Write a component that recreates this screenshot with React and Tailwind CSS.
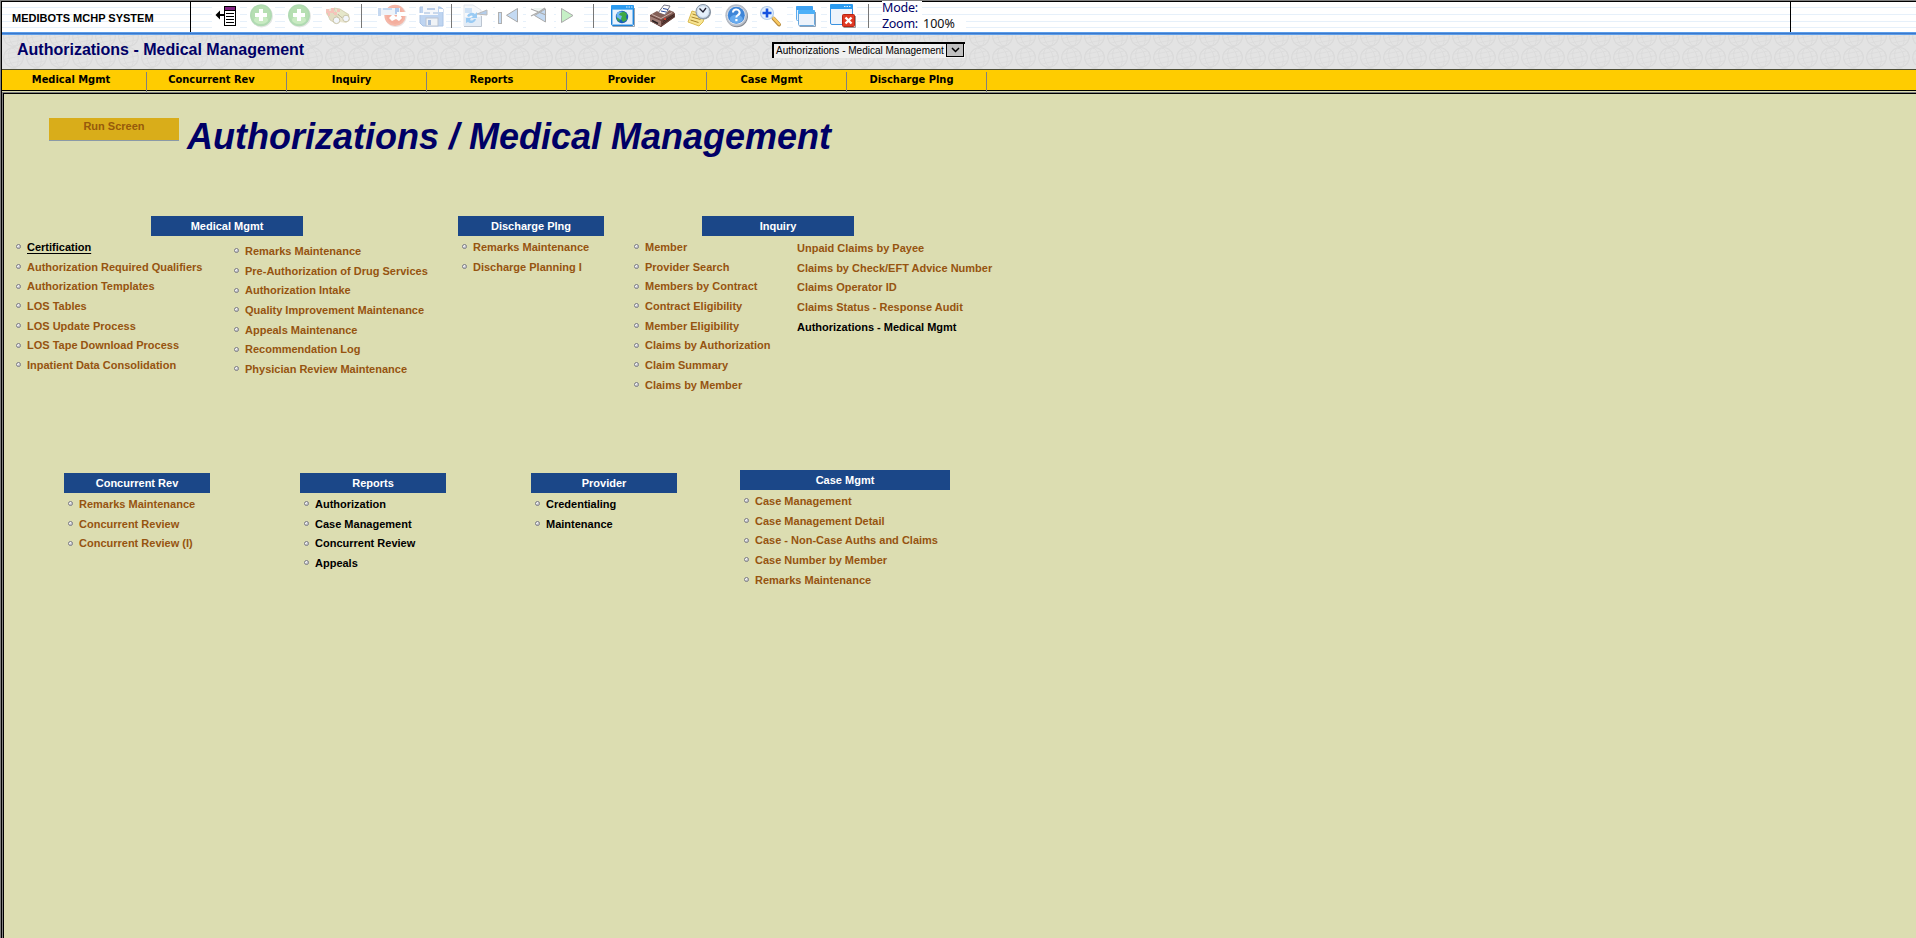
import React from "react";

const NAV = ["Medical Mgmt", "Concurrent Rev", "Inquiry", "Reports", "Provider", "Case Mgmt", "Discharge Plng"];

/* A slice of the toolbar: x is the slice's left edge in toolbar coordinates. */
function Slice({ x, w, children }) {
  return (
    <svg className="block h-[30px] shrink-0" width={w} height="30" viewBox={`${x} 2 ${w} 30`}>
      {children}
    </svg>
  );
}

function Sep({ x, w, at }) {
  return (
    <Slice x={x} w={w}>
      <rect x={at} y="4" width="1" height="24" fill="#777" />
    </Slice>
  );
}

function Plus({ x, w, cx }) {
  return (
    <Slice x={x} w={w}>
      <rect x={cx - 14} y="2" width="28" height="27" fill="#fff" />
      <circle cx={cx + 0.7} cy="16.200" r="11.200" fill="#e3e6e3" />
      <circle cx={cx} cy="15.200" r="11" fill="#b0dab2" />
      <circle cx={cx} cy="14.800" r="9.400" fill="#b6dfb2" />
      <ellipse cx={cx} cy="20" rx="7" ry="4" fill="#c9ebc2" />
      <path d={`M${cx - 2} 9h4v4h4v4h-4v4h-4v-4h-4v-4h4z`} fill="#fff" />
    </Slice>
  );
}

function Toolbar() {
  return (
    <div className="flex h-[30px]">
      <Slice x={191} w={55}>
        <rect x="212" y="2" width="28" height="27" fill="#fff" />
        <rect x="224.500" y="6.500" width="11" height="19" fill="#fff" stroke="#000" />
        <rect x="225" y="7" width="10" height="3" fill="#802080" />
        <path d="M224 10.500h12M226 13.500h8M226 16.500h8M226 19.500h8M226 22.500h8" stroke="#000" />
        <path d="M219 15h5" stroke="#000" strokeWidth="2" />
        <path d="M215.500 15l4.500-4.500v9z" fill="#000" />
      </Slice>
      <Plus x={246} w={38} cx={261} />
      <Plus x={284} w={36} cx={299} />
      <Slice x={320} w={36}>
        <rect x="322" y="2" width="32" height="27" fill="#fff" />
        <g opacity=".8">
          <path d="M326 10l6-2 8 1 9 5 1 6-4 3-6-1-4 2-5-5-5-5z" fill="#e6e0c4" />
          <path d="M334 8l6 1 9 6-4 4-9-5z" fill="#dfe2bd" stroke="#c2bd9a" strokeWidth=".7" />
          <path d="M327 13l5-1 7 6-4 5-5-3z" fill="#ddd5b4" stroke="#c2bd9a" strokeWidth=".7" />
          <path d="M326 9h3v2h2v-3h3v4h3v-3h3v3h-3v3h-3v-2h-4v3h-2v-3h-2z" fill="#f5b5aa" />
          <path d="M338 14l4 4" stroke="#b5b08c" />
          <circle cx="336.500" cy="20.300" r="3.300" fill="#f0f5fc" stroke="#bdb795" />
          <circle cx="346" cy="18.500" r="3.300" fill="#f0f5fc" stroke="#bdb795" />
        </g>
      </Slice>
      <Sep x={356} w={18} at={361} />
      <Slice x={374} w={40}>
        <rect x="377" y="2" width="32" height="27" fill="#fff" />
        <circle cx="395.700" cy="16" r="11" fill="#e9e4e4" />
        <circle cx="395" cy="15.400" r="10.600" fill="#f5b7a8" />
        <circle cx="395" cy="15.400" r="8.500" fill="#f4ae9e" />
        <path d="M389 18l3-3h2l2 2 2-2h2l2 3-3 3-3-2-4 2z" fill="#fff" />
        <rect x="378" y="8" width="22" height="7" fill="#eef3f9" />
        <rect x="378" y="8" width="3" height="8" fill="#c5d8f0" />
        <rect x="383" y="8" width="9" height="2" fill="#c6daf2" />
        <rect x="395" y="8" width="4" height="6" fill="#b2cbee" />
        <rect x="397" y="12" width="10" height="4" fill="#fff" />
      </Slice>
      <Slice x={414} w={32}>
        <rect x="416" y="2" width="30" height="27" fill="#fff" />
        <g opacity=".8">
          <path d="M420 7h20l3 2v17h-20l-3-3z" fill="#b0cbee" stroke="#97b6e0" />
          <rect x="423" y="4" width="15" height="11" fill="#f4f7fb" />
          <rect x="427" y="8" width="8" height="2" fill="#a9c2e6" />
          <rect x="424" y="12" width="6" height="2" fill="#bccfe8" />
          <rect x="433" y="12" width="5" height="2" fill="#bccfe8" />
          <rect x="426" y="18" width="12" height="8" fill="#edf1f5" stroke="#a9b6c8" />
          <rect x="428" y="20" width="3" height="5" fill="#8fadd8" />
          <path d="M419 13h5v2h-5zM439 9h4v3h-4z" fill="#fff" />
        </g>
      </Slice>
      <Sep x={446} w={14} at={451} />
      <Slice x={460} w={34}>
        <rect x="461" y="2" width="32" height="27" fill="#fff" />
        <path d="M464 5h9l8 5v16h-17z" fill="#f6f8fb" stroke="#e0e5ec" />
        <path d="M464 17h17v9h-17z" fill="#e3ecf6" />
        <path d="M464 26.500h17.500V16" fill="none" stroke="#bcc5d1" />
        <path d="M467 16a5 5 0 0 1 8-2l2-2v6h-6l2-2a3 3 0 0 0-4 1zM476 19a5 5 0 0 1-8 3l-2 1v-5h5l-1 2a3 3 0 0 0 4-1z" fill="#9acbf4" />
        <path d="M477 14l10-4v5z" fill="#b4cdeb" stroke="#bbb" />
        <rect x="465" y="8" width="7" height="5" fill="#cfe2f6" />
      </Slice>
      <Slice x={494} w={30}>
        <rect x="495" y="2" width="28" height="27" fill="#fff" />
        <rect x="498.500" y="12.500" width="3" height="11" fill="#c4daf3" stroke="#b0b0b0" />
        <path d="M517.500 8.500v13.500l-11-6.700z" fill="#c4daf3" stroke="#aaa" />
      </Slice>
      <Slice x={524} w={30}>
        <rect x="526" y="2" width="28" height="27" fill="#fff" />
        <path d="M545.500 9v13l-11-6.500z" fill="#c4daf3" stroke="#aaa" />
        <path d="M533 8h12l-6 4z" fill="#eef5f2" />
        <path d="M531 9l5 2 10 4M545 8l-6 4-8 4" stroke="#aaa" strokeWidth="1.300" fill="none" />
      </Slice>
      <Slice x={554} w={30}>
        <rect x="556" y="2" width="28" height="27" fill="#fff" />
        <path d="M561.500 8.500l11.500 7-11.500 7z" fill="#c6f0c6" stroke="#aaa" />
      </Slice>
      <Sep x={584} w={22} at={593} />
      <Slice x={606} w={38}>
        <rect x="608" y="2" width="30" height="27" fill="#fff" />
        <path d="M634.500 8v18.500h-22" stroke="#9aa6b4" fill="none" />
        <rect x="611.500" y="5.500" width="22" height="20" rx="1.500" fill="#eaf2fc" stroke="#1e82d8" />
        <rect x="612.500" y="9" width="20" height="15.500" fill="none" stroke="#8cc4f4" />
        <rect x="611" y="5" width="23" height="4.500" rx="1" fill="#2b9bf0" />
        <path d="M626 7h1.500M628.500 7h1.500M631 7h1.500" stroke="#d8efff" />
        <circle cx="622" cy="17" r="6.200" fill="#1c5cb8" />
        <circle cx="620.500" cy="15.500" r="4" fill="#6cb4f2" />
        <path d="M620 13l4-1.500 3 2.500-1 3 1 3-4 2-2-3 1-3-3-1zM616.500 17l3 2v3l-2-1.500z" fill="#3fa845" />
      </Slice>
      <Slice x={644} w={38}>
        <rect x="648" y="2" width="30" height="27" fill="#fff" />
        <path d="M658 13l6-8 6 1-5 9z" fill="#fff" stroke="#787888" />
        <path d="M661 11l5 1M663 8.500l5 1" stroke="#2b4a98" />
        <path d="M650 15l7-4 3 2 5 2 4-5 5 2 1 5-14 10-11-6z" fill="#846058" />
        <path d="M650 15l11 5 14-7v4l-14 10-11-6z" fill="#67423c" />
        <path d="M650 16l11 5v5l-11-5z" fill="#a17e76" />
        <path d="M652 14.500l9 4 11-6" stroke="#c9aca4" fill="none" />
        <path d="M652 20.500l6 3" stroke="#2a2020" strokeWidth="1.500" />
        <path d="M662 24l12-8M663 21.500l11-7" stroke="#3e2925" />
        <rect x="664" y="18" width="2" height="2" fill="#d63b2a" />
      </Slice>
      <Slice x={682} w={38}>
        <rect x="685" y="2" width="30" height="27" fill="#fff" />
        <path d="M692 11l13 4-2 7-4 4-11-4z" fill="#f8e490" stroke="#d9ba50" />
        <path d="M692.500 14l8 2.500M691.500 17l9 2.500M690.500 20l8 2.500" stroke="#a8842c" />
        <circle cx="703.500" cy="12" r="7.600" fill="#8a95a3" />
        <circle cx="703" cy="11.500" r="7" fill="#cfdeee" stroke="#8b98a8" />
        <circle cx="703" cy="11.500" r="5.300" fill="#e6f0fb" />
        <path d="M699.500 8.500l3.500 3.500 3-4" stroke="#223" strokeWidth="1.300" fill="none" />
      </Slice>
      <Slice x={720} w={35}>
        <rect x="722" y="2" width="30" height="27" fill="#fff" />
        <circle cx="737" cy="16.300" r="11" fill="#858a92" />
        <circle cx="736.300" cy="15.300" r="11" fill="#b9bfc9" />
        <circle cx="736.300" cy="15.300" r="9.300" fill="#e4e9f0" />
        <circle cx="736.300" cy="15.300" r="8.500" fill="#3f86d8" />
        <ellipse cx="736.300" cy="19" rx="6.500" ry="4.300" fill="#66aaee" />
        <path d="M733 12.500a3.300 3 0 1 1 5 2.500c-1.200.8-1.700 1.200-1.700 2.500" stroke="#fff" strokeWidth="2" fill="none" />
        <rect x="735.300" y="19" width="2.200" height="2.200" fill="#fff" />
      </Slice>
      <Slice x={755} w={35}>
        <rect x="757" y="2" width="30" height="27" fill="#fff" />
        <path d="M773.500 18.500l5.500 6" stroke="#b78a3c" strokeWidth="4" strokeLinecap="round" />
        <path d="M773.500 18l5.500 6" stroke="#f8c860" strokeWidth="2.400" strokeLinecap="round" />
        <circle cx="767" cy="13" r="6.500" fill="#e4f1fd" stroke="#b4cdea" strokeWidth="1.200" />
        <path d="M767 8.500v9M762.500 13h9" stroke="#1553e0" strokeWidth="2.600" />
      </Slice>
      <Slice x={790} w={34}>
        <rect x="793" y="2" width="28" height="27" fill="#fff" />
        <rect x="796.500" y="6.500" width="16" height="14" rx="1" fill="#e8f2fc" stroke="#5aaaf0" />
        <rect x="796" y="6" width="17" height="4" rx="1" fill="#3fa2f2" />
        <rect x="798.500" y="10.500" width="16" height="15" rx="1" fill="#edf3fb" stroke="#6aa8dc" />
        <rect x="798" y="10" width="17" height="4" rx="1" fill="#4cb0f8" />
        <path d="M815.500 12v14.500h-16" stroke="#8aa0b8" fill="none" />
      </Slice>
      <Slice x={824} w={38}>
        <rect x="827" y="2" width="30" height="27" fill="#fff" />
        <rect x="830.500" y="4.500" width="22" height="20" rx="1.500" fill="#edf3fb" stroke="#3a92e0" />
        <rect x="830" y="4" width="23" height="5" rx="1" fill="#2b9bf0" />
        <path d="M844 6.500h1.500M846.500 6.500h1.500M849 6.500h1.500" stroke="#d8efff" />
        <path d="M855.500 16v11.500h-12" stroke="#999" fill="none" />
        <rect x="842.500" y="14.500" width="12" height="12" rx="1" fill="#e03a24" stroke="#b82414" />
        <path d="M845.500 17.500l6 6M851.500 17.500l-6 6" stroke="#fff" strokeWidth="2.400" />
      </Slice>
      <Sep x={862} w={20} at={868} />
      <div className="h-[30px] w-[84px] font-['Noto_Sans',sans-serif] text-[12.5px] leading-[15px] text-[#000066]">
        <div className="-mt-px h-[15px] w-[40px] bg-white leading-[13px] tracking-[-0.2px] whitespace-nowrap">Mode:</div>
        <div className="flex bg-white whitespace-nowrap">
          <span className="w-[41px] tracking-[-0.3px]">Zoom:</span>
          <span className="text-[#111]">100%</span>
        </div>
      </div>
    </div>
  );
}

function GlobeTexture() {
  return (
    <svg className="absolute inset-0 h-full w-full">
      <defs>
        <pattern id="globes" width="23" height="21" patternUnits="userSpaceOnUse" patternTransform="translate(0 12)">
          <g fill="none" stroke="#dadada" transform="rotate(-12 11.500 10.500)">
            <circle cx="11.500" cy="10.500" r="9.800" strokeWidth="1.300" />
            <ellipse cx="11.500" cy="10.500" rx="4.500" ry="9.500" strokeWidth=".8" />
            <path d="M2 10.500h19M4 5.500h15M4 15.500h15" strokeWidth=".7" />
          </g>
        </pattern>
      </defs>
      <rect width="100%" height="100%" fill="url(#globes)" />
    </svg>
  );
}

function Bullet() {
  return (
    <svg className="mt-[-2px] mr-[6px] block shrink-0" width="5" height="5" viewBox="0 0 5 5">
      <circle cx="2.500" cy="2.500" r="2" fill="#f4f4f4" stroke="#77777f" />
      <path d="M1.500 3.700L3.700 1.500v2.200z" fill="#a9a9b4" />
    </svg>
  );
}

function List({ items, dark = [], bullets = true, className = "" }) {
  return (
    <ul className={`text-[11px] font-bold ${className}`}>
      {items.map((t, i) => (
        <li key={t} className="flex h-[19.69px] items-center leading-[19.69px] whitespace-nowrap">
          {bullets && <Bullet />}
          <a
            className={
              dark.includes(i)
                ? t === "Certification"
                  ? "text-black underline underline-offset-2"
                  : "text-black"
                : "text-[#965410]"
            }
          >
            {t}
          </a>
        </li>
      ))}
    </ul>
  );
}

function Head({ children, className }) {
  return (
    <h2 className={`h-[20px] bg-[#1b4788] text-center text-[11px] leading-[21px] font-bold text-white ${className}`}>
      {children}
    </h2>
  );
}

export default function App() {
  return (
    <div className="flex h-[938px] w-[1916px] flex-col overflow-hidden border-t border-l border-[#808080] bg-[#dcddb1] font-['Liberation_Sans',Arial,sans-serif]">
      <div className="flex flex-1 flex-col border-t border-l border-black">
        <header className="flex h-[30px] shrink-0 bg-white bg-[linear-gradient(#e6f0fa,#e6f0fa),linear-gradient(#e6f0fa,#e6f0fa),linear-gradient(#e6f0fa,#e6f0fa),linear-gradient(#e6f0fa,#e6f0fa)] bg-[length:100%_1px] bg-[position:0_5px,0_12px,0_19px,0_25px] bg-no-repeat">
          <div className="w-[189px] border-r border-black pl-[10px] text-[11px] leading-[32px] font-bold text-black">
            MEDIBOTS MCHP SYSTEM
          </div>
          <Toolbar />
          <div className="flex-1" />
          <div className="w-[126px] border-l border-black" />
        </header>
        <div className="h-[3px] shrink-0 border-y border-[#5b9de8] bg-[#3c78cc]" />

        <div className="relative flex h-[34px] shrink-0 bg-[#e3e3e3]">
          <GlobeTexture />
          <h1 className="relative w-[770px] pl-[15px] text-[16px] leading-[29px] font-bold text-[#000066]">
            Authorizations - Medical Management
          </h1>
          <div className="relative mt-[7px] flex h-[16px] w-[193px] border-t-2 border-l-2 border-black bg-[#f0f0f0] text-[10px] leading-[14px] text-black">
            <span className="w-[172px] pl-[2px] whitespace-nowrap">Authorizations - Medical Management</span>
            <span className="flex h-[13px] w-[18px] items-center justify-center border-r border-b border-l border-black bg-[#c0c0c0]">
              <svg width="9" height="6" viewBox="0 0 9 6">
                <path d="M1 1l3.500 3.500L8 1" fill="none" stroke="#000" strokeWidth="1.500" />
              </svg>
            </span>
          </div>
        </div>

        <nav className="flex h-[21px] shrink-0 border-t border-[#4d4d33] bg-[#ffcc00]">
          {NAV.map((n, i) => (
            <div
              key={n}
              className={`relative mt-[2px] h-[20px] border-r border-[#808080] text-center font-['DejaVu_Sans_Condensed','DejaVu_Sans',sans-serif] text-[11px] leading-[15px] font-bold whitespace-nowrap text-black ${
                i === 0 ? "w-[145px] pr-[6px]" : "w-[140px] pr-[10px]"
              }`}
            >
              {n}
            </div>
          ))}
        </nav>
        <div className="h-px shrink-0 bg-black" />
        <div className="h-px shrink-0 bg-[#dcddb1]" />

        <main className="flex-1 border-t border-l border-[#808080]">
          <div className="h-full border-t border-l border-black">
            <div className="flex h-[122px] pt-[24px] pl-[45px]">
              <button className="h-[23px] w-[130px] border-b border-[#8a9aa8] bg-[#d9ad1a] pb-[6px] text-[11px] leading-[16px] font-bold text-[#965a0c]">
                Run Screen
              </button>
              <div className="ml-[8px] text-[36px] leading-[38px] font-bold whitespace-nowrap text-[#000066] italic">
                Authorizations / Medical Management
              </div>
            </div>

            <div className="flex h-[257px] pl-[12px]">
              <section className="w-[442px]">
                <Head className="ml-[135px] w-[152px]">Medical Mgmt</Head>
                <div className="flex pt-[2px]">
                  <List
                    className="w-[218px]"
                    dark={[0]}
                    items={[
                      "Certification",
                      "Authorization Required Qualifiers",
                      "Authorization Templates",
                      "LOS Tables",
                      "LOS Update Process",
                      "LOS Tape Download Process",
                      "Inpatient Data Consolidation",
                    ]}
                  />
                  <List
                    className="pt-[4px]"
                    items={[
                      "Remarks Maintenance",
                      "Pre-Authorization of Drug Services",
                      "Authorization Intake",
                      "Quality Improvement Maintenance",
                      "Appeals Maintenance",
                      "Recommendation Log",
                      "Physician Review Maintenance",
                    ]}
                  />
                </div>
              </section>
              <section className="w-[176px]">
                <Head className="w-[146px]">Discharge Plng</Head>
                <List className="pt-[2px] pl-[4px]" items={["Remarks Maintenance", "Discharge Planning I"]} />
              </section>
              <section>
                <Head className="ml-[68px] w-[152px]">Inquiry</Head>
                <div className="flex pt-[2px]">
                  <List
                    className="w-[163px]"
                    items={[
                      "Member",
                      "Provider Search",
                      "Members by Contract",
                      "Contract Eligibility",
                      "Member Eligibility",
                      "Claims by Authorization",
                      "Claim Summary",
                      "Claims by Member",
                    ]}
                  />
                  <List
                    className="pt-[1px]"
                    bullets={false}
                    dark={[4]}
                    items={[
                      "Unpaid Claims by Payee",
                      "Claims by Check/EFT Advice Number",
                      "Claims Operator ID",
                      "Claims Status - Response Audit",
                      "Authorizations - Medical Mgmt",
                    ]}
                  />
                </div>
              </section>
            </div>

            <div className="flex pl-[60px]">
              <section className="w-[236px]">
                <Head className="w-[146px]">Concurrent Rev</Head>
                <List className="pt-[2px] pl-[4px]" items={["Remarks Maintenance", "Concurrent Review", "Concurrent Review (I)"]} />
              </section>
              <section className="w-[231px]">
                <Head className="w-[146px]">Reports</Head>
                <List
                  className="pt-[2px] pl-[4px]"
                  dark={[0, 1, 2, 3]}
                  items={["Authorization", "Case Management", "Concurrent Review", "Appeals"]}
                />
              </section>
              <section className="w-[209px]">
                <Head className="w-[146px]">Provider</Head>
                <List className="pt-[2px] pl-[4px]" dark={[0, 1]} items={["Credentialing", "Maintenance"]} />
              </section>
              <section className="-mt-[3px]">
                <Head className="w-[210px]">Case Mgmt</Head>
                <List
                  className="pt-[2px] pl-[4px]"
                  items={[
                    "Case Management",
                    "Case Management Detail",
                    "Case - Non-Case Auths and Claims",
                    "Case Number by Member",
                    "Remarks Maintenance",
                  ]}
                />
              </section>
            </div>
          </div>
        </main>
      </div>
    </div>
  );
}
